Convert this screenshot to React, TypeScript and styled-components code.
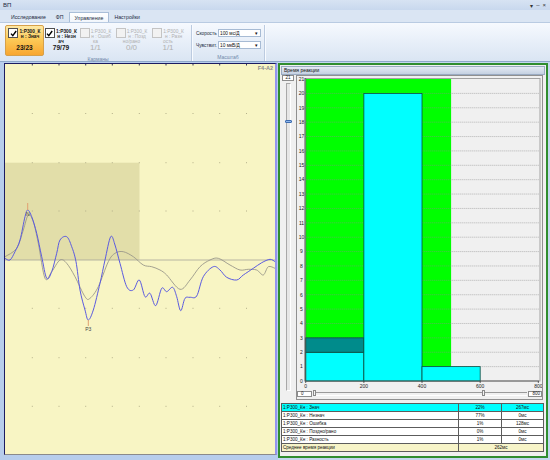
import React from "react";
import styled, { createGlobalStyle, css } from "styled-components";

const GlobalStyle = createGlobalStyle`
  html, body { margin: 0; padding: 0; }
  body { font-family: "Liberation Sans", Arial, sans-serif; background: #c6d8ef; }
`;

const Window = styled.div`
  width: 550px;
  height: 460px;
  display: flex;
  flex-direction: column;
  background: #c4d7ef;
  overflow: hidden;
  color: #1c1c1c;
`;

const TitleBar = styled.div`
  height: 10px;
  display: flex;
  align-items: center;
  justify-content: space-between;
  padding: 0 4px 0 3px;
  background: linear-gradient(#d7e3f3, #c8d8ee);
  font-size: 6px;
  color: #1e2c44;
`;

const WinButtons = styled.div`
  display: flex;
  gap: 3px;
  font-size: 6px;
  color: #333;
`;

const TabStrip = styled.div`
  height: 12px;
  display: flex;
  align-items: flex-end;
  padding-left: 6px;
  background: #dae5f3;
`;

const Tab = styled.div<{ $active?: boolean }>`
  height: 10px;
  line-height: 10px;
  padding: 0 5px;
  font-size: 5.2px;
  color: #1d2b40;
  ${(p) =>
    p.$active &&
    css`
      background: linear-gradient(#ffffff, #f1f6fc);
      border: 1px solid #a9bed8;
      border-bottom: none;
      height: 9px;
    `}
`;

const Ribbon = styled.div`
  height: 40px;
  box-sizing: border-box;
  display: flex;
  padding: 2px 0 0 5px;
  background: linear-gradient(#f6f9fe 0%, #e6eef8 55%, #dae5f3 100%);
  border-top: 1px solid #b9cbe2;
  border-bottom: 1px solid #8fa8ca;
`;

const Group = styled.div<{ $w: number }>`
  width: ${(p) => p.$w}px;
  display: flex;
  flex-direction: column;
  border-right: 1px solid #bccbe0;
  box-shadow: 1px 0 0 #f8fbff;
`;

const GroupBody = styled.div`
  flex: 1;
  display: flex;
`;

const GroupLabel = styled.div`
  height: 7px;
  line-height: 6px;
  font-size: 5px;
  text-align: center;
  color: #7088aa;
`;

const Pocket = styled.div<{ $w: number; $active?: boolean; $off?: boolean }>`
  width: ${(p) => p.$w}px;
  box-sizing: border-box;
  display: flex;
  flex-direction: column;
  align-items: center;
  padding-top: 2px;
  height: 31px;
  color: ${(p) => (p.$off ? "#b0b0b0" : "#141414")};
  border: 1px solid transparent;
  border-radius: 2px;
  ${(p) =>
    p.$active &&
    css`
      background: linear-gradient(#fde9a6 0%, #fccb58 45%, #f8a630 100%);
      border-color: #d6a04a;
    `}
`;

const PocketHead = styled.div`
  display: flex;
  align-items: flex-start;
  gap: 1px;
`;

const Check = styled.div<{ $off?: boolean }>`
  width: 8px;
  height: 8px;
  flex: none;
  border: 1px solid ${(p) => (p.$off ? "#c4c4c4" : "#505050")};
  background: ${(p) => (p.$off ? "#f2f2f2" : "#ffffff")};
  display: flex;
  align-items: center;
  justify-content: center;
`;

const PocketText = styled.div<{ $off?: boolean }>`
  font-size: 4.8px;
  line-height: 5px;
  font-weight: ${(p) => (p.$off ? 400 : 700)};
  text-align: center;
  padding-top: 1px;
`;

const PocketTail = styled.div<{ $off?: boolean }>`
  height: 5px;
  font-size: 4.8px;
  line-height: 5px;
  font-weight: ${(p) => (p.$off ? 400 : 700)};
`;

const PocketCount = styled.div<{ $off?: boolean }>`
  font-size: ${(p) => (p.$off ? "8px" : "6.5px")};
  line-height: 8px;
  font-weight: ${(p) => (p.$off ? 400 : 700)};
`;

const ScaleBody = styled.div`
  flex: 1;
  display: flex;
  flex-direction: column;
  gap: 4px;
  padding: 4px 0 0 4px;
`;

const ScaleRow = styled.div`
  display: flex;
  align-items: center;
  gap: 1px;
`;

const ScaleLabel = styled.div`
  width: 21px;
  font-size: 4.8px;
  color: #1d2b40;
`;

const Combo = styled.div`
  width: 43px;
  height: 8px;
  box-sizing: border-box;
  border: 1px solid #a7bbd4;
  background: #fff;
  display: flex;
  align-items: center;
  justify-content: space-between;
  padding: 0 2px 0 1px;
  font-size: 4.8px;
  color: #111;
`;

const Main = styled.div`
  flex: 1;
  display: flex;
  min-height: 0;
`;

const LeftPane = styled.div`
  width: 278px;
  box-sizing: border-box;
  padding: 1px 1px 5px 4px;
  background: #b7cdec;
  display: flex;
`;

const Plot = styled.div`
  width: 270px;
  height: 390px;
  border-left: 1px solid #1c1c62;
  border-top: 1px solid #1c1c62;
  border-right: 2px solid #9494ee;
  border-bottom: 1px solid #8a8a8a;
  background: #f8f5c4;
  svg { display: block; }
`;

const RightPane = styled.div`
  width: 270px;
  box-sizing: border-box;
  margin: 1px 0 2px 0;
  border: 2px solid #2f8d2f;
  background: #f0f0f0;
  padding: 1px;
  display: flex;
  flex-direction: column;
`;

const PaneHeader = styled.div`
  height: 9px;
  box-sizing: border-box;
  border: 1px solid #9aabc2;
  background: linear-gradient(#e4eaf3, #c5d1e2);
  font-size: 5px;
  line-height: 7px;
  padding-left: 2px;
  color: #111;
`;

const ChartArea = styled.div`
  height: 325px;
  display: flex;
`;

const VSlider = styled.div`
  width: 15px;
  display: flex;
  flex-direction: column;
  align-items: center;
  padding-right: 1px;
  box-sizing: border-box;
`;

const SliderBox = styled.div`
  box-sizing: border-box;
  border: 1px solid #8c8c8c;
  background: #fff;
  font-size: 4.5px;
  line-height: 4px;
  text-align: center;
  color: #222;
`;

const VTrack = styled.div`
  position: relative;
  width: 5px;
  flex: 1;
  margin: 2px 0 9px;
  box-sizing: border-box;
  border: 1px solid #a8a8a8;
  border-right-color: #ffffff;
  border-bottom-color: #ffffff;
  background: #e6e6e6;
`;

const VThumb = styled.div`
  position: absolute;
  left: -2px;
  top: 36px;
  width: 7px;
  height: 3px;
  border: 1px solid #3d6cb0;
  border-radius: 1px;
  background: #8fb6ea;
  box-sizing: border-box;
`;

const ChartBox = styled.div`
  width: 247px;
  box-sizing: border-box;
  border: 1px solid #909090;
  background: #f0f0f0;
  display: flex;
  flex-direction: column;
  svg { display: block; }
`;

const HScroll = styled.div`
  height: 7px;
  display: flex;
  align-items: center;
`;

const HTrack = styled.div`
  position: relative;
  flex: 1;
  height: 2px;
  margin: 0 1px;
  border-top: 1px solid #9a9a9a;
  border-bottom: 1px solid #ffffff;
`;

const HThumb = styled.div<{ $at: number }>`
  position: absolute;
  left: ${(p) => p.$at}px;
  top: -3px;
  width: 3px;
  height: 6px;
  box-sizing: border-box;
  border: 1px solid #8a8a8a;
  background: #f4f4f4;
`;

const Table = styled.table`
  margin-top: 3px;
  width: 262px;
  border-collapse: collapse;
  font-size: 4.6px;
  table-layout: fixed;
  color: #111;
`;

const Row = styled.tr<{ $bg?: string }>`
  background: ${(p) => p.$bg || "#ffffff"};
  height: 8px;
`;

const Cell = styled.td<{ $center?: boolean }>`
  border: 1px solid #5c5c5c;
  padding: 0 1px;
  line-height: 6px;
  text-align: ${(p) => (p.$center ? "center" : "left")};
  white-space: nowrap;
  overflow: hidden;
`;

/* smooth curve through the traced points */
function smooth(pts: number[][]): string {
  let d = `M${pts[0][0]} ${pts[0][1]}`;
  for (let i = 0; i < pts.length - 1; i++) {
    const p0 = pts[i - 1] || pts[i];
    const p1 = pts[i];
    const p2 = pts[i + 1];
    const p3 = pts[i + 2] || p2;
    const c1x = p1[0] + (p2[0] - p0[0]) / 6;
    const c1y = p1[1] + (p2[1] - p0[1]) / 6;
    const c2x = p2[0] - (p3[0] - p1[0]) / 6;
    const c2y = p2[1] - (p3[1] - p1[1]) / 6;
    d += ` C${c1x.toFixed(1)} ${c1y.toFixed(1)} ${c2x.toFixed(1)} ${c2y.toFixed(1)} ${p2[0]} ${p2[1]}`;
  }
  return d;
}

const bluePts = [
  [5, 258.3], [10, 260], [15, 251.7], [20, 240], [25, 216.7], [27.7, 210], [31.7, 216.7],
  [36.7, 233.3], [41.7, 256.7], [46.7, 278.3], [51.7, 271.7], [56.7, 253.3], [60, 240],
  [66.7, 236.7], [71.7, 246.7], [76, 261.7], [80, 290], [85, 310], [88.3, 320], [93.3, 310],
  [100, 283.3], [105, 260], [110.7, 236.7], [115, 245], [120, 263.3], [126.7, 286.7],
  [133.3, 290], [139.3, 280], [145, 296.7], [150, 293.3], [155.7, 305.7], [161.7, 288.3],
  [166.7, 291.7], [172.7, 287.3], [176.7, 296.7], [180.7, 310.7], [185, 298.3], [190, 297.3],
  [196.7, 296], [203.3, 276.7], [213.3, 266.7], [220, 270], [226.7, 277.3], [236.7, 280],
  [243.3, 275], [253.3, 268.3], [261.7, 262.7], [270, 259.3], [275, 261.7],
];

const grayPts = [
  [5, 256.7], [16.7, 248.3], [23.3, 230], [28.3, 215], [33.3, 221.7], [38.3, 243.3],
  [45, 278.3], [51.7, 271.7], [60, 260], [66.7, 263.3], [75, 276.7], [85, 296.7], [90, 298.3],
  [98.3, 286.7], [108.3, 261.7], [115, 253.3], [123.3, 251.7], [133.3, 256.7], [143.3, 265],
  [151.7, 266.7], [160, 270], [166.7, 275], [180, 289.3], [190, 280], [200, 266.7],
  [210, 260], [218.3, 258.3], [230, 265], [240, 270], [248.3, 269.3], [256.7, 270],
  [263.3, 275], [268.3, 266.7], [275, 268.3],
];

const gridX = [32.3, 59, 85.7, 112.3, 139.3, 166, 193, 219.7, 246.5];
const gridY = [113.5, 162.7, 211, 308.3, 357.7, 406.3];

const EegPlot = () => (
  <svg width={270} height={390} viewBox="5 64 270 390">
    <rect x={5} y={162.7} width={134.5} height={97.3} fill="#e2dea9" />
    {gridX.map((x) => (
      <rect key={`t${x}`} x={x - 0.5} y={64} width={1} height={1.5} fill="#3a3a5a" />
    ))}
    {gridX.map((x) =>
      gridY.map((y) => <rect key={`${x}-${y}`} x={x - 0.5} y={y - 0.5} width={1} height={1} fill="#b4b08a" />)
    )}
    <line x1={5} y1={260} x2={275} y2={260} stroke="#a6a59a" strokeWidth={0.8} />
    <path d={smooth(grayPts)} fill="none" stroke="#9a978a" strokeWidth={0.9} />
    <path d={smooth(bluePts)} fill="none" stroke="#5a5ae0" strokeWidth={1} />
    <line x1={27.7} y1={203} x2={27.7} y2={210} stroke="#e0a070" strokeWidth={1} />
    <text x={27.7} y={216} fontSize={5} textAnchor="middle" fill="#444">N</text>
    <line x1={88.3} y1={320} x2={88.3} y2={326} stroke="#e0a070" strokeWidth={1} />
    <text x={88.3} y={331} fontSize={5} textAnchor="middle" fill="#444">P3</text>
    <text x={273} y={70} fontSize={5.5} textAnchor="end" fill="#8a8a8a" fontWeight={700}>F4-A2</text>
  </svg>
);

const X0 = 305.7;
const XS = 0.2908;
const Y0 = 381;
const YS = 14.38;
const xm = (ms: number) => X0 + ms * XS;
const yn = (n: number) => Y0 - n * YS;

const bars = [
  { from: 0, to: 200, lo: 0, hi: 2, fill: "#00ffff" },
  { from: 0, to: 200, lo: 2, hi: 3, fill: "#008b8b" },
  { from: 200, to: 400, lo: 0, hi: 20, fill: "#00ffff" },
  { from: 400, to: 600, lo: 0, hi: 1, fill: "#00ffff" },
];

const Histogram = () => (
  <svg width={245} height={314} viewBox="297 76 245 314">
    <rect x={304.5} y={78.5} width={235.5} height={302.5} fill="#f0f0f0" stroke="#a2a2a2" strokeWidth={1} />
    <rect x={xm(0)} y={yn(21)} width={xm(500) - xm(0)} height={21 * YS} fill="#00ff00" />
    {Array.from({ length: 20 }, (_, i) => i + 1).map((n) => (
      <line key={n} x1={xm(0)} y1={yn(n)} x2={539} y2={yn(n)} stroke="#8c8c8c" strokeWidth={0.6} strokeDasharray="1 1" />
    ))}
    {bars.map((b, i) => (
      <rect
        key={i}
        x={xm(b.from)}
        y={yn(b.hi)}
        width={xm(b.to) - xm(b.from)}
        height={(b.hi - b.lo) * YS}
        fill={b.fill}
        stroke="#0e4a40"
        strokeWidth={0.8}
      />
    ))}
    <line x1={X0} y1={78} x2={X0} y2={Y0} stroke="#505050" strokeWidth={0.8} />
    <line x1={X0} y1={Y0} x2={539} y2={Y0} stroke="#505050" strokeWidth={0.8} />
    {Array.from({ length: 22 }, (_, n) => (
      <text key={n} x={301.5} y={yn(n) + 1.8} fontSize={5} textAnchor="middle" fill="#222">
        {n}
      </text>
    ))}
    {[0, 200, 400, 600, 800].map((ms) => (
      <g key={ms}>
        <line x1={xm(ms)} y1={Y0} x2={xm(ms)} y2={Y0 + 2} stroke="#404040" strokeWidth={0.8} />
        <text x={xm(ms)} y={Y0 + 7} fontSize={5} textAnchor="middle" fill="#222">
          {ms}
        </text>
      </g>
    ))}
  </svg>
);

const pockets = [
  { w: 39, l1: "1:P300_К", l2: "н : Знач", tail: "", count: "23/23", active: true },
  { w: 34, l1: "1:P300_К", l2: "н : Незн", tail: "ач", count: "79/79" },
  { w: 35, l1: "1:P300_К", l2: "н : Ошиб", tail: "ка", count: "1/1", off: true },
  { w: 37, l1: "1:P300_К", l2: "н : Позд", tail: "но/рано", count: "0/0", off: true },
  { w: 36, l1: "1:P300_К", l2: "н : Разн", tail: "ость", count: "1/1", off: true },
];

const rows = [
  { name: "1:P300_Кн : Знач", pct: "22%", time: "267мс", bg: "#00ffff" },
  { name: "1:P300_Кн : Незнач", pct: "77%", time: "0мс" },
  { name: "1:P300_Кн : Ошибка", pct: "1%", time: "128мс" },
  { name: "1:P300_Кн : Поздно/рано", pct: "0%", time: "0мс" },
  { name: "1:P300_Кн : Разность", pct: "1%", time: "0мс" },
];

const Tick = () => (
  <svg width={7} height={7} viewBox="0 0 7 7">
    <path d="M1 3.6 L2.8 5.6 L6.2 1" fill="none" stroke="#000" strokeWidth={1.4} />
  </svg>
);

export default function App() {
  return (
    <Window>
      <GlobalStyle />
      <TitleBar>
        <span>ВП</span>
        <WinButtons>
          <span>▾</span>
          <span>‒</span>
          <span>×</span>
        </WinButtons>
      </TitleBar>
      <TabStrip>
        <Tab>Исследование</Tab>
        <Tab>ФП</Tab>
        <Tab $active>Управление</Tab>
        <Tab>Настройки</Tab>
      </TabStrip>
      <Ribbon>
        <Group $w={186}>
          <GroupBody>
            {pockets.map((p, i) => (
              <Pocket key={i} $w={p.w} $active={p.active} $off={p.off}>
                <PocketHead>
                  <Check $off={p.off}>{!p.off && <Tick />}</Check>
                  <PocketText $off={p.off}>
                    {p.l1}
                    <br />
                    {p.l2}
                  </PocketText>
                </PocketHead>
                <PocketTail $off={p.off}>{p.tail}</PocketTail>
                <PocketCount $off={p.off}>{p.count}</PocketCount>
              </Pocket>
            ))}
          </GroupBody>
          <GroupLabel>Карманы</GroupLabel>
        </Group>
        <Group $w={72}>
          <ScaleBody>
            <ScaleRow>
              <ScaleLabel>Скорость</ScaleLabel>
              <Combo>
                <span>100 мс/Д</span>
                <span>▾</span>
              </Combo>
            </ScaleRow>
            <ScaleRow>
              <ScaleLabel>Чувствит.</ScaleLabel>
              <Combo>
                <span>10 мкВ/Д</span>
                <span>▾</span>
              </Combo>
            </ScaleRow>
          </ScaleBody>
          <GroupLabel>Масштаб</GroupLabel>
        </Group>
      </Ribbon>
      <Main>
        <LeftPane>
          <Plot>
            <EegPlot />
          </Plot>
        </LeftPane>
        <RightPane>
          <PaneHeader>Время реакции</PaneHeader>
          <ChartArea>
            <VSlider>
              <SliderBox style={{ width: 12, height: 6 }}>21</SliderBox>
              <VTrack>
                <VThumb />
              </VTrack>
            </VSlider>
            <ChartBox>
              <Histogram />
              <HScroll>
                <SliderBox style={{ width: 15, height: 6, textAlign: "left", paddingLeft: 3 }}>0</SliderBox>
                <HTrack>
                  <HThumb $at={0} />
                  <HThumb $at={169} />
                </HTrack>
                <SliderBox style={{ width: 14, height: 6, textAlign: "right", paddingRight: 1 }}>800</SliderBox>
              </HScroll>
            </ChartBox>
          </ChartArea>
          <Table>
            <colgroup>
              <col style={{ width: 177 }} />
              <col style={{ width: 43 }} />
              <col style={{ width: 42 }} />
            </colgroup>
            <tbody>
              {rows.map((r) => (
                <Row key={r.name} $bg={r.bg}>
                  <Cell>{r.name}</Cell>
                  <Cell $center>{r.pct}</Cell>
                  <Cell $center>{r.time}</Cell>
                </Row>
              ))}
              <Row $bg="#f7f4c8">
                <Cell>Среднее время реакции</Cell>
                <Cell $center colSpan={2}>
                  262мс
                </Cell>
              </Row>
            </tbody>
          </Table>
        </RightPane>
      </Main>
    </Window>
  );
}
